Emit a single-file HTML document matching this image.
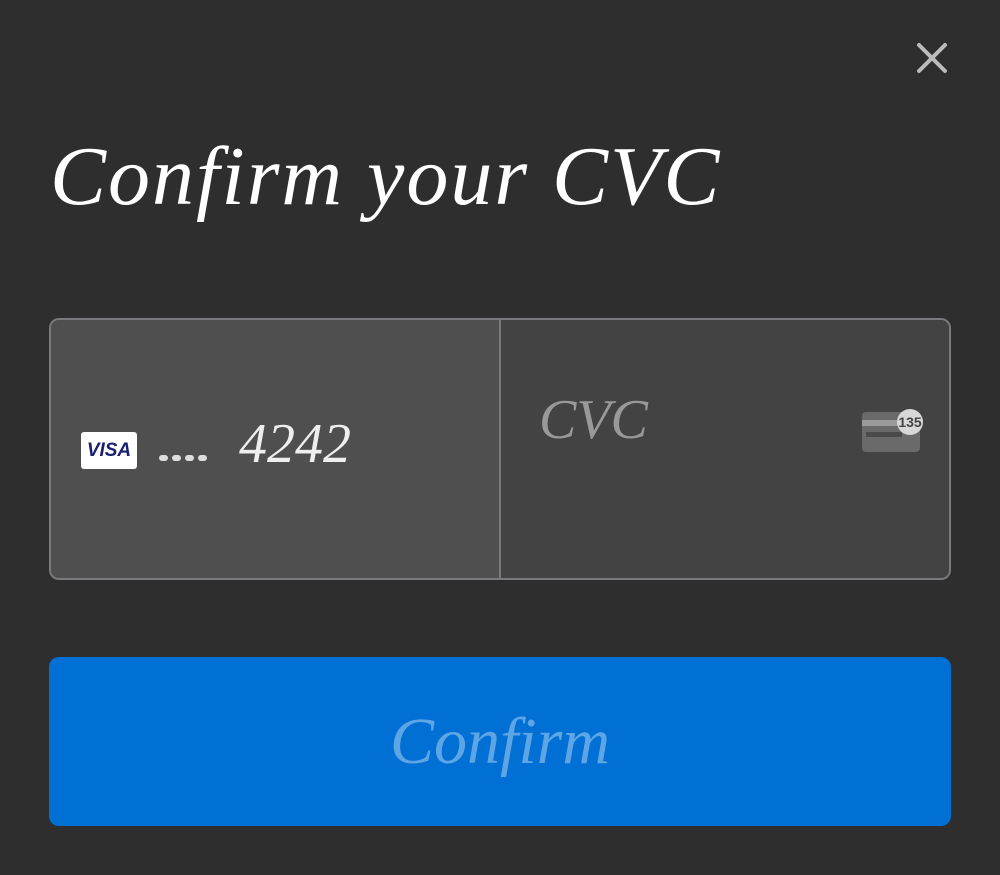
<!DOCTYPE html>
<html><head><style>
body{margin:0;width:1000px;height:875px;background:#2e2e2e;overflow:hidden;font-family:"Liberation Serif",serif;}
.close{position:absolute;left:916px;top:42px;width:32px;height:32px;}
h1{position:absolute;left:50px;top:128px;margin:0;font-style:italic;font-weight:normal;color:#fff;font-size:84px;letter-spacing:2px;}
.box{position:absolute;left:49px;top:318px;width:898px;height:258px;border:2px solid #7a7a7e;border-radius:10px;overflow:hidden;}
.l{position:absolute;left:0;top:0;width:448px;height:258px;background:#4f4f4f;border-right:2px solid #7a7a7e;}
.r{position:absolute;left:450px;top:0;width:448px;height:258px;background:#434343;}
.visa{position:absolute;left:30px;top:112px;width:56px;height:37px;background:#fff;border-radius:3px;color:#1a1f71;font:italic bold 19px "Liberation Sans",sans-serif;text-align:center;line-height:37px;}
.dots{position:absolute;left:108px;top:128px;}
.dots span{display:inline-block;width:9px;height:6px;border-radius:3px;background:#ddd;margin-right:4px;}
.num{position:absolute;left:188px;top:92px;color:#eee;font:italic 56px "Liberation Serif",serif;}
.cvc{position:absolute;left:38px;top:68px;color:#999;font:italic 56px "Liberation Serif",serif;}
.btn{position:absolute;left:49px;top:657px;width:902px;height:169px;background:#0070d4;border-radius:10px;text-align:center;color:#5ea5e6;font:italic 66px/169px "Liberation Serif",serif;}
</style></head><body>
<svg class="close" viewBox="0 0 32 32"><path d="M3 3L29 29M29 3L3 29" stroke="#bbb" stroke-width="4" stroke-linecap="round"/></svg>
<h1>Confirm your CVC</h1>
<div class="box">
<div class="l"><div class="visa">VISA</div><div class="dots"><span></span><span></span><span></span><span></span></div><div class="num">4242</div></div>
<div class="r"><div class="cvc">CVC</div>
<svg style="position:absolute;left:361px;top:88px" width="64" height="46" viewBox="0 0 64 46"><rect x="0" y="4" width="58" height="40" rx="4" fill="#6a6a6a"/><rect x="0" y="12" width="58" height="6" fill="#9a9a9a"/><rect x="4" y="24" width="36" height="5" rx="1" fill="#4a4a4a"/><circle cx="48" cy="14" r="13" fill="#d8d8d8"/><text x="48" y="19" text-anchor="middle" font-family="Liberation Sans" font-weight="bold" font-size="14" fill="#444">135</text></svg>
</div></div>
<div class="btn">Confirm</div>
</body></html>
